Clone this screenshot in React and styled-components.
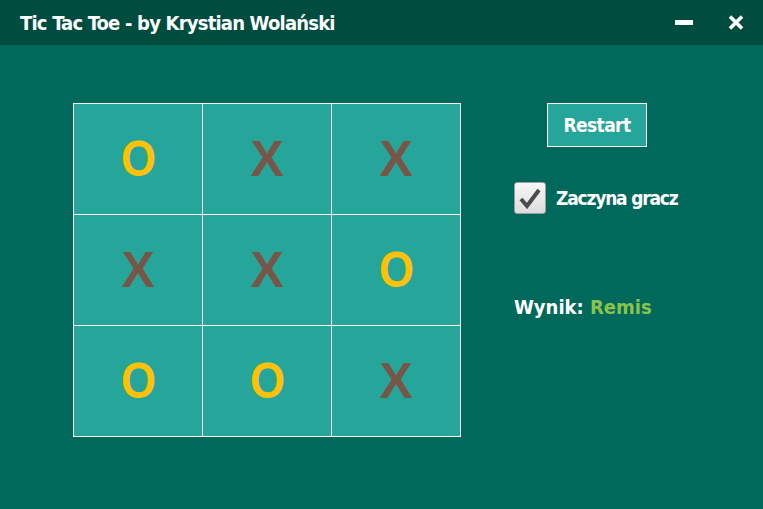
import React from "react";
import styled, { createGlobalStyle } from "styled-components";

const GlobalStyle = createGlobalStyle`
  html, body {
    margin: 0;
    padding: 0;
    background: #00695c;
  }
  body {
    font-family: "Liberation Sans Narrow", "DejaVu Sans Condensed", "Liberation Sans", sans-serif;
  }
`;

const Window = styled.div`
  width: 763px;
  height: 509px;
  background: #00695c;
  color: #fff;
  overflow: hidden;
`;

const TitleBar = styled.div`
  height: 45px;
  background: #004d40;
  display: flex;
  align-items: center;
  padding: 0 7px 0 20px;
  .title {
    flex: 1;
    font-size: 20px;
    font-weight: 700;
    letter-spacing: -0.8px;
    white-space: nowrap;
  }
`;

const WinButton = styled.button`
  width: 40px;
  height: 45px;
  border: none;
  background: transparent;
  display: flex;
  align-items: center;
  justify-content: center;
  padding: 0;
  margin-left: ${(p) => p.$gap || 0}px;
`;

const Main = styled.div`
  display: flex;
  align-items: flex-start;
  padding: 58px 0 0 73px;
  gap: 53px;
`;

const Board = styled.div`
  display: grid;
  grid-template-columns: repeat(3, 128px);
  grid-template-rows: repeat(3, 110px);
  gap: 1px;
  border: 1px solid #fff;
  background: #fff;
`;

const Cell = styled.div`
  background: #26a69a;
  display: flex;
  align-items: center;
  justify-content: center;
  font-family: "Liberation Sans", Arial, sans-serif;
  font-weight: 700;
  font-size: 50px;
  color: ${(p) => (p.$mark === "O" ? "#ffc107" : "#795548")};
  span {
    display: inline-block;
    transform: ${(p) => (p.$mark === "O" ? "scaleX(0.9)" : "none")};
  }
`;

const Side = styled.div`
  width: 200px;
  display: flex;
  flex-direction: column;
  align-items: flex-start;
`;

const RestartButton = styled.button`
  width: 100px;
  height: 44px;
  margin-left: 33px;
  border: 1px solid #fff;
  background: #26a69a;
  color: #fff;
  font-family: inherit;
  font-size: 19px;
  font-weight: 700;
  letter-spacing: -0.6px;
  padding: 0;
`;

const CheckRow = styled.label`
  display: flex;
  align-items: center;
  gap: 10px;
  margin-top: 35px;
  font-size: 19px;
  font-weight: 700;
  letter-spacing: -1.2px;
  white-space: nowrap;
`;

const CheckBox = styled.span`
  width: 30px;
  height: 30px;
  border: 1px solid #9e9e9e;
  border-radius: 3px;
  background: linear-gradient(#f7f7f7, #dcdcdc);
  display: flex;
  align-items: center;
  justify-content: center;
`;

const Score = styled.div`
  margin-top: 81px;
  font-size: 20px;
  font-weight: 700;
  letter-spacing: 0;
  span {
    color: #8bc34a;
  }
`;

const board = ["O", "X", "X", "X", "X", "O", "O", "O", "X"];

const App = () => {
  return (
    <Window>
      <GlobalStyle />
      <TitleBar>
        <div className="title">Tic Tac Toe - by Krystian Wolański</div>
        <WinButton aria-label="minimize">
          <svg width="18" height="5">
            <rect width="18" height="5" fill="#fff" />
          </svg>
        </WinButton>
        <WinButton aria-label="close" $gap={12}>
          <svg width="16" height="15" viewBox="0 0 16 15">
            <path d="M2 1.5L14 13.5M14 1.5L2 13.5" stroke="#fff" strokeWidth="3.6" />
          </svg>
        </WinButton>
      </TitleBar>
      <Main>
        <Board>
          {board.map((m, i) => (
            <Cell key={i} $mark={m}>
              <span>{m}</span>
            </Cell>
          ))}
        </Board>
        <Side>
          <RestartButton>Restart</RestartButton>
          <CheckRow>
            <CheckBox>
              <svg width="24" height="22" viewBox="0 0 24 22">
                <path d="M3 12L9 19L21 3" fill="none" stroke="#4a4a4a" strokeWidth="4" />
              </svg>
            </CheckBox>
            Zaczyna gracz
          </CheckRow>
          <Score>
            Wynik: <span>Remis</span>
          </Score>
        </Side>
      </Main>
    </Window>
  );
};

export default App;
